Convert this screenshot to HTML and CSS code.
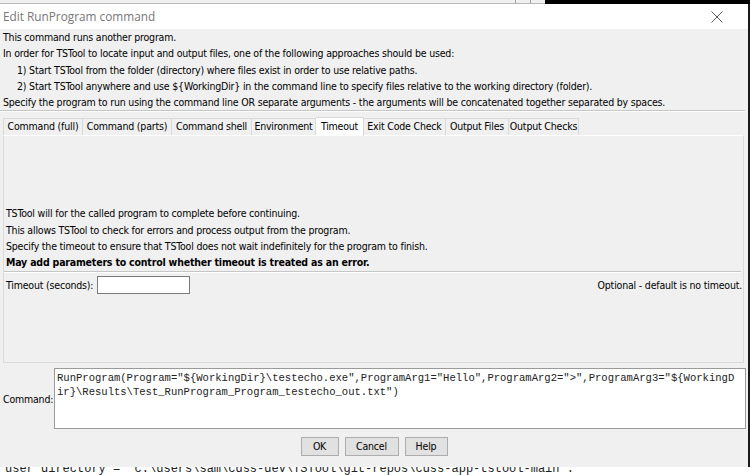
FILE: index.html
```html
<!DOCTYPE html>
<html>
<head>
<meta charset="utf-8">
<title>Edit RunProgram command</title>
<link rel="stylesheet" href="styles.css">
</head>
<body>
<div class="topstrip">
  <div class="ts-gray"></div>
  <div class="ts-btn"></div>
  <div class="ts-btn"></div>
  <div class="ts-black"></div>
</div>
<div class="frame">
  <div class="dialog">
    <div class="titlebar">
      <span class="title">Edit RunProgram command</span>
      <svg class="close" width="12" height="12" viewBox="0 0 12 12"><path d="M0.5 0.5L11.5 11.5M11.5 0.5L0.5 11.5" stroke="#5a5a5a" stroke-width="1" fill="none"/></svg>
    </div>
    <div class="body">
      <div class="intro">
        <div class="line">This command runs another program.</div>
        <div class="line">In order for TSTool to locate input and output files, one of the following approaches should be used:</div>
        <div class="line indent">1) Start TSTool from the folder (directory) where files exist in order to use relative paths.</div>
        <div class="line indent">2) Start TSTool anywhere and use ${WorkingDir} in the command line to specify files relative to the working directory (folder).</div>
        <div class="line">Specify the program to run using the command line OR separate arguments - the arguments will be concatenated together separated by spaces.</div>
      </div>
      <div class="sep"></div>
      <div class="tabs">
        <div class="tab">Command (full)</div>
        <div class="tab">Command (parts)</div>
        <div class="tab">Command shell</div>
        <div class="tab">Environment</div>
        <div class="tab active">Timeout</div>
        <div class="tab">Exit Code Check</div>
        <div class="tab">Output Files</div>
        <div class="tab">Output Checks</div>
      </div>
      <div class="panel">
        <div class="notes">
          <div class="line">TSTool will for the called program to complete before continuing.</div>
          <div class="line">This allows TSTool to check for errors and process output from the program.</div>
          <div class="line">Specify the timeout to ensure that TSTool does not wait indefinitely for the program to finish.</div>
          <div class="line bold">May add parameters to control whether timeout is treated as an error.</div>
        </div>
        <div class="sep panel-sep"></div>
        <div class="field">
          <span class="label">Timeout (seconds):</span>
          <div class="input"></div>
          <span class="spacer"></span>
          <span class="hint">Optional - default is no timeout.</span>
        </div>
      </div>
      <div class="cmdrow">
        <span class="cmdlabel">Command:</span>
        <div class="cmdbox"><div class="cmdline">RunProgram(Program="${WorkingDir}\testecho.exe",ProgramArg1="Hello",ProgramArg2=">",ProgramArg3="${WorkingD</div><div class="cmdline">ir}\Results\Test_RunProgram_Program_testecho_out.txt")</div></div>
      </div>
      <div class="buttons">
        <div class="btn btn-ok">OK</div>
        <div class="btn btn-cancel">Cancel</div>
        <div class="btn btn-help">Help</div>
      </div>
    </div>
  </div>
  <div class="edge"></div>
</div>
<div class="console">
  <div class="console-text">user directory = "c:\users\sam\cdss-dev\TSTool\git-repos\cdss-app-tstool-main".</div>
</div>
</body>
</html>
```

FILE: styles.css
```css
html, body {
  margin: 0;
  padding: 0;
}
body {
  width: 750px;
  height: 475px;
  overflow: hidden;
  background: #ffffff;
  font-family: "DejaVu Sans Condensed", "DejaVu Sans", sans-serif;
  font-stretch: condensed;
  font-size: 10.5px;
  letter-spacing: -0.19px;
  color: #000;
}

.topstrip {
  display: flex;
  height: 4px;
}
.ts-gray {
  width: 515px;
  background: #f0f0f0;
  border-bottom: 1px solid #b8b8b8;
  box-sizing: border-box;
}
.ts-btn {
  width: 15px;
  background: #f0f0f0;
  border-left: 1px solid #a0a0a0;
  border-bottom: 1px solid #b8b8b8;
  box-sizing: border-box;
}
.ts-black {
  flex: 1;
  background: #000;
}

.frame {
  display: flex;
  height: 463px;
}
.dialog {
  width: 748px;
  display: flex;
  flex-direction: column;
  background: #f0f0f0;
}
.edge {
  width: 2px;
  background: #1a1a1a;
}

.titlebar {
  height: 25px;
  background: #fff;
  display: flex;
  align-items: center;
  padding-left: 3px;
  padding-right: 25px;
}
.title {
  font-family: "Open Sans", "Noto Sans", sans-serif;
  font-stretch: normal;
  letter-spacing: 0;
  font-size: 11.8px;
  color: #777;
  flex: 1;
  padding-bottom: 1px;
}
.close {
  display: block;
  margin-top: 1px;
}

.body {
  flex: 1;
  padding: 0 4px 0 3px;
  display: flex;
  flex-direction: column;
}
.line {
  height: 16.3px;
  line-height: 16.3px;
  white-space: nowrap;
}
.indent {
  padding-left: 14px;
}
.bold {
  font-weight: bold;
}
.sep {
  height: 0;
  border-top: 1px solid #c6c6c6;
  border-bottom: 1px solid #fff;
  margin-left: -3px;
  margin-right: -1px;
}
.tabs {
  display: flex;
  align-items: flex-end;
  height: 18px;
  margin-top: 5px;
}
.tab {
  box-sizing: border-box;
  height: 17px;
  line-height: 15px;
  text-align: center;
  border-top: 1px solid #d9d9d9;
  border-right: 1px solid #d9d9d9;
  background: #f0f0f0;
  white-space: nowrap;
}
.tab:first-child { border-left: 1px solid #d9d9d9; width: 80px; }
.tab:nth-child(2) { width: 89px; }
.tab:nth-child(3) { width: 80px; }
.tab:nth-child(4) { width: 64px; }
.tab:nth-child(5) { width: 48px; }
.tab:nth-child(6) { width: 82px; }
.tab:nth-child(7) { width: 63px; }
.tab:nth-child(8) { width: 70px; }
.tab.active {
  height: 19px;
  line-height: 16px;
  background: #fff;
  border-color: #d9d9d9;
  margin-bottom: -1px;
  position: relative;
  z-index: 1;
}

.panel {
  height: 228px;
  box-sizing: border-box;
  border: 1px solid #dadada;
  border-top-color: #fff;
  background: #f0f0f0;
  padding: 69px 1px 0 1px;
  display: flex;
  flex-direction: column;
}
.notes .line {
  padding-left: 1px;
}
.panel-sep {
  margin: 0 1px 0 -1px;
}
.field {
  display: flex;
  align-items: center;
  margin-top: 3px;
  height: 18px;
}
.label {
  padding-left: 1px;
  width: 91px;
  white-space: nowrap;
}
.input {
  width: 93px;
  height: 18px;
  box-sizing: border-box;
  background: #fff;
  border: 1px solid #7a7a7a;
}
.spacer {
  flex: 1;
}
.hint {
  white-space: nowrap;
}

.cmdrow {
  display: flex;
  align-items: center;
  margin-top: 5px;
}
.cmdlabel {
  width: 51px;
  white-space: nowrap;
}
.cmdbox {
  width: 692px;
  height: 61px;
  box-sizing: border-box;
  background: #fff;
  border: 1px solid #9a9a9a;
  padding: 2px 0 0 2px;
  margin-right: -3px;
  font-family: "Liberation Mono", "Courier New", monospace;
  font-stretch: normal;
  letter-spacing: 0;
  font-size: 10.55px;
  color: #222;
  overflow: hidden;
}
.cmdline {
  height: 14px;
  line-height: 14px;
  white-space: pre;
}

.buttons {
  display: flex;
  justify-content: center;
  gap: 6px;
  margin-top: 8px;
  padding-left: 1px;
}
.btn {
  box-sizing: border-box;
  height: 19px;
  line-height: 17px;
  text-align: center;
  background: #e1e1e1;
  border: 1px solid #adadad;
}
.btn-ok { width: 38px; }
.btn-cancel { width: 54px; }
.btn-help { width: 43px; }

.console {
  height: 8px;
  overflow: hidden;
  background: #fff;
}
.console-text {
  margin-top: -4px;
  padding-left: 5px;
  font-family: "Liberation Mono", "DejaVu Sans Mono", monospace;
  font-stretch: normal;
  letter-spacing: 0;
  font-size: 12px;
  line-height: 12px;
  color: #222;
  white-space: pre;
}
```
